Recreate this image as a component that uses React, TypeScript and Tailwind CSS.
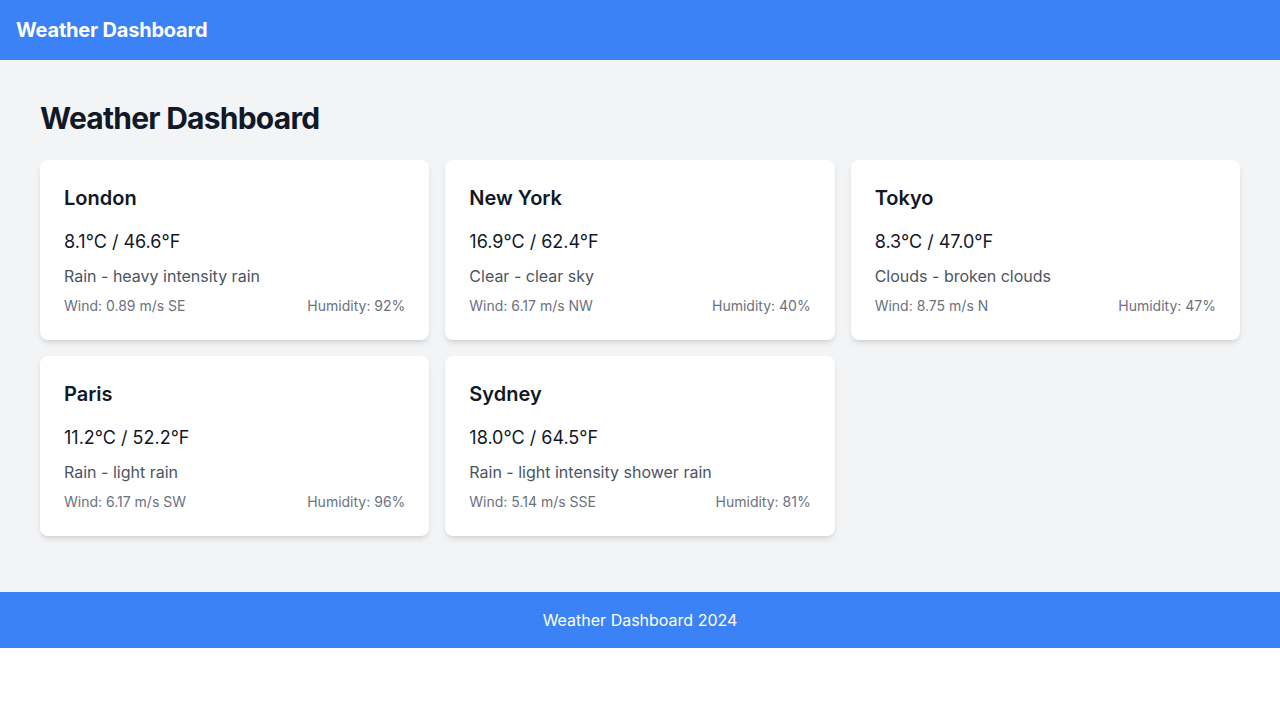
const cities = [
  { name: "London", temp: "8.1°C / 46.6°F", desc: "Rain - heavy intensity rain", wind: "0.89 m/s SE", humidity: "92%" },
  { name: "New York", temp: "16.9°C / 62.4°F", desc: "Clear - clear sky", wind: "6.17 m/s NW", humidity: "40%" },
  { name: "Tokyo", temp: "8.3°C / 47.0°F", desc: "Clouds - broken clouds", wind: "8.75 m/s N", humidity: "47%" },
  { name: "Paris", temp: "11.2°C / 52.2°F", desc: "Rain - light rain", wind: "6.17 m/s SW", humidity: "96%" },
  { name: "Sydney", temp: "18.0°C / 64.5°F", desc: "Rain - light intensity shower rain", wind: "5.14 m/s SSE", humidity: "81%" },
];

export default function App() {
  return (
    <div className="font-['Inter',sans-serif]">
      {/* Header */}
      <header className="bg-[#3b82f6] p-4 shadow-md">
        <h1 className="text-xl font-bold tracking-[-0.01em] text-white">Weather Dashboard</h1>
      </header>

      {/* Main */}
      <main className="bg-[#f3f4f6] px-10 pt-10 pb-14">
        <h2 className="mb-6 text-3xl font-bold tracking-tight text-[#111827]">Weather Dashboard</h2>
        <div className="grid grid-cols-3 gap-4">
          {cities.map((c) => (
            <div key={c.name} className="rounded-lg bg-white p-6 shadow-md">
              <h3 className="mb-4 text-xl font-semibold text-[#111827]">{c.name}</h3>
              <p className="mb-2 text-lg text-[#111827]">{c.temp}</p>
              <p className="text-base text-[#4b5563]">{c.desc}</p>
              <div className="mt-2 flex justify-between text-sm text-[#6b7280]">
                <span>Wind: {c.wind}</span>
                <span>Humidity: {c.humidity}</span>
              </div>
            </div>
          ))}
        </div>
      </main>

      {/* Footer */}
      <footer className="bg-[#3b82f6] p-4 text-center text-base text-white">
        Weather Dashboard 2024
      </footer>
    </div>
  );
}
